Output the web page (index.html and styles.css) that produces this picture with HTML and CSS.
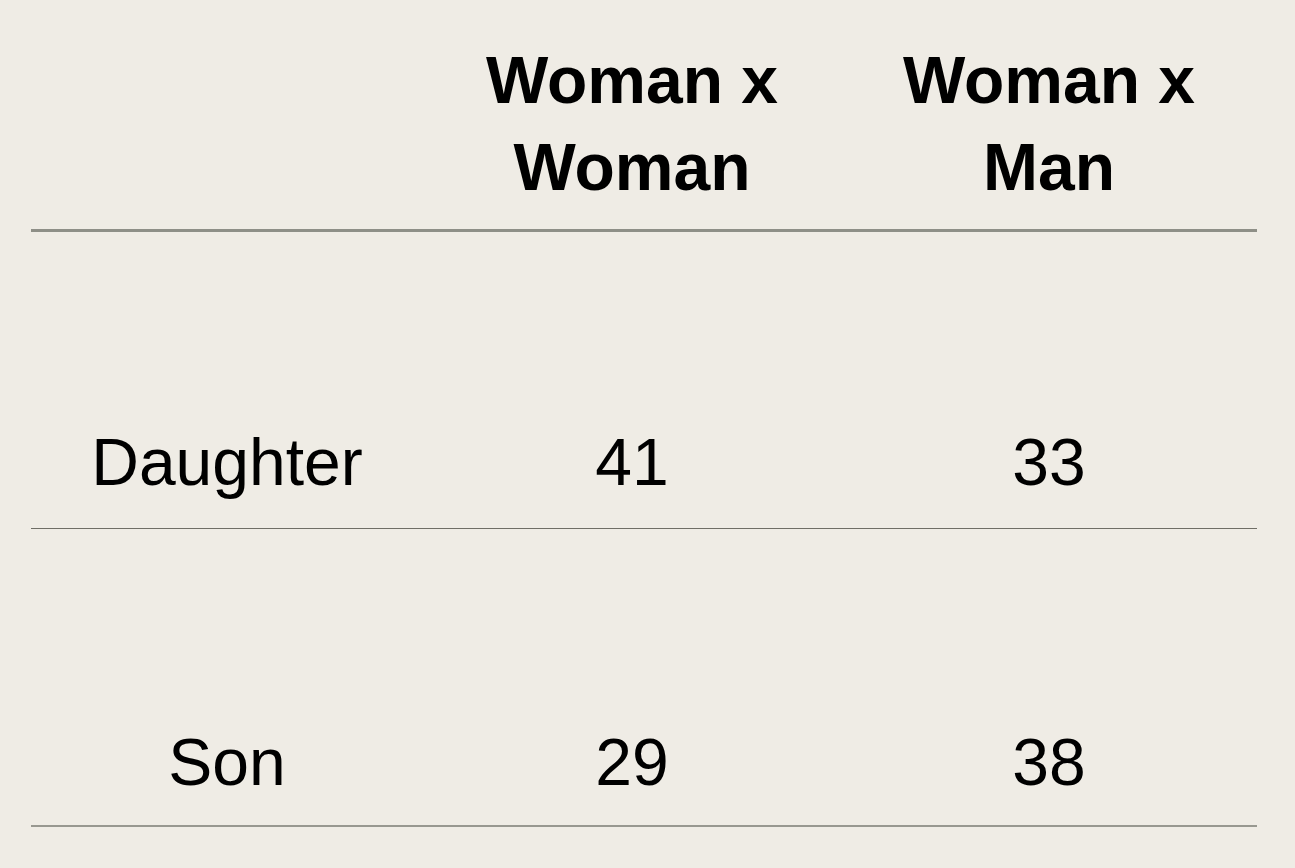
FILE: index.html
```html
<!DOCTYPE html>
<html>
<head>
<meta charset="utf-8">
<link rel="stylesheet" href="styles.css">
</head>
<body>
<div class="table">
  <div class="row head">
    <div class="cell"></div>
    <div class="cell">Woman x<br>Woman</div>
    <div class="cell">Woman x<br>Man</div>
  </div>
  <div class="row body r1">
    <div class="cell">Daughter</div>
    <div class="cell">41</div>
    <div class="cell">33</div>
  </div>
  <div class="row body r2">
    <div class="cell">Son</div>
    <div class="cell">29</div>
    <div class="cell">38</div>
  </div>
</div>
</body>
</html>
```
FILE: styles.css
```css
html, body {
  margin: 0;
  padding: 0;
  background: #efece5;
}
body {
  width: 1295px;
  height: 868px;
  overflow: hidden;
  font-family: "Liberation Sans", Arial, sans-serif;
  color: #000;
}
.table {
  margin-left: 31px;
  width: 1226px;
}
.row {
  display: grid;
  grid-template-columns: 392px 418px 416px;
  align-items: end;
}
.cell {
  text-align: center;
  font-size: 66px;
  line-height: 87px;
}
.head {
  padding-top: 37px;
  height: 192px;
  border-bottom: 3px solid #8e8f87;
}
.head .cell {
  font-weight: bold;
  align-self: start;
}
.r1 {
  height: 296px;
  border-bottom: 1px solid #6f6e66;
}
.r1 .cell {
  padding-bottom: 22px;
}
.r2 {
  height: 296px;
  border-bottom: 2px solid #989890;
}
.r2 .cell {
  padding-bottom: 19px;
}
```
